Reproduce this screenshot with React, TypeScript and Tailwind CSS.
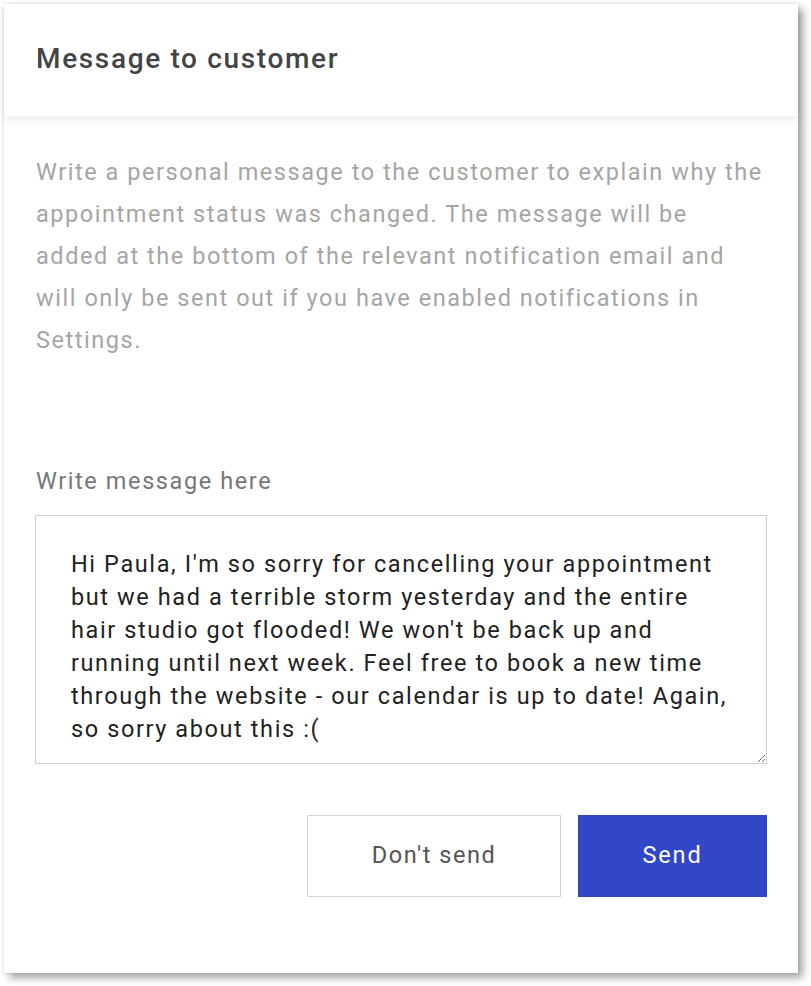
import React from "react";

export default function App() {
  const msg =
    "Hi Paula, I'm so sorry for cancelling your appointment but we had a terrible storm yesterday and the entire hair studio got flooded! We won't be back up and running until next week. Feel free to book a new time through the website - our calendar is up to date! Again, so sorry about this :(";
  return (
    <div
      className="w-[811px] h-[986px] bg-white pt-[4px] pl-[4px]"
      style={{ fontFamily: "Roboto, 'Noto Sans', sans-serif" }}
    >
      <div className="w-[794px] h-[969px] bg-white flex flex-col shadow-[0_0_3px_rgba(0,0,0,0.12),5px_5px_8px_rgba(0,0,0,0.35)]">
        <div className="relative z-10 h-[112px] shrink-0 flex items-center pb-[2px] px-[32px] bg-white shadow-[0_3px_10px_rgba(0,0,0,0.09)]">
          <h1 className="text-[28px] font-medium text-[#444444] tracking-[1.65px]">
            Message to customer
          </h1>
        </div>
        <div className="flex flex-col px-[31px] pt-[35px]">
          <p className="text-[23.5px] leading-[42px] text-[#a5a5a5] pl-[1px] tracking-[1.55px] whitespace-nowrap">
            Write a personal message to the customer to explain why the
            <br />
            appointment status was changed. The message will be
            <br />
            added at the bottom of the relevant notification email and
            <br />
            will only be sent out if you have enabled notifications in
            <br />
            Settings.
          </p>
          <label className="mt-[99px] text-[23.5px] leading-[42px] text-[#777777] pl-[1px] tracking-[1.6px]">
            Write message here
          </label>
          <textarea
            defaultValue={msg}
            className="mt-[13px] w-full h-[249px] border border-[#cfcfcf] pt-[32px] pl-[35px] pr-[32px] text-[23.5px] leading-[33px] text-[#222222] outline-none bg-white tracking-[1.6px] overflow-hidden"
            style={{ fontFamily: "Roboto, 'Noto Sans', sans-serif" }}
          />
          <div className="mt-[51px] flex justify-end gap-[17px]">
            <button className="w-[254px] h-[82px] border border-[#d3d3d3] bg-white text-[23.5px] text-[#555555] tracking-[1.55px]">
              Don't send
            </button>
            <button className="w-[189px] h-[82px] bg-[#3247c7] text-[23.5px] text-white tracking-[1.9px]">
              Send
            </button>
          </div>
        </div>
      </div>
    </div>
  );
}
